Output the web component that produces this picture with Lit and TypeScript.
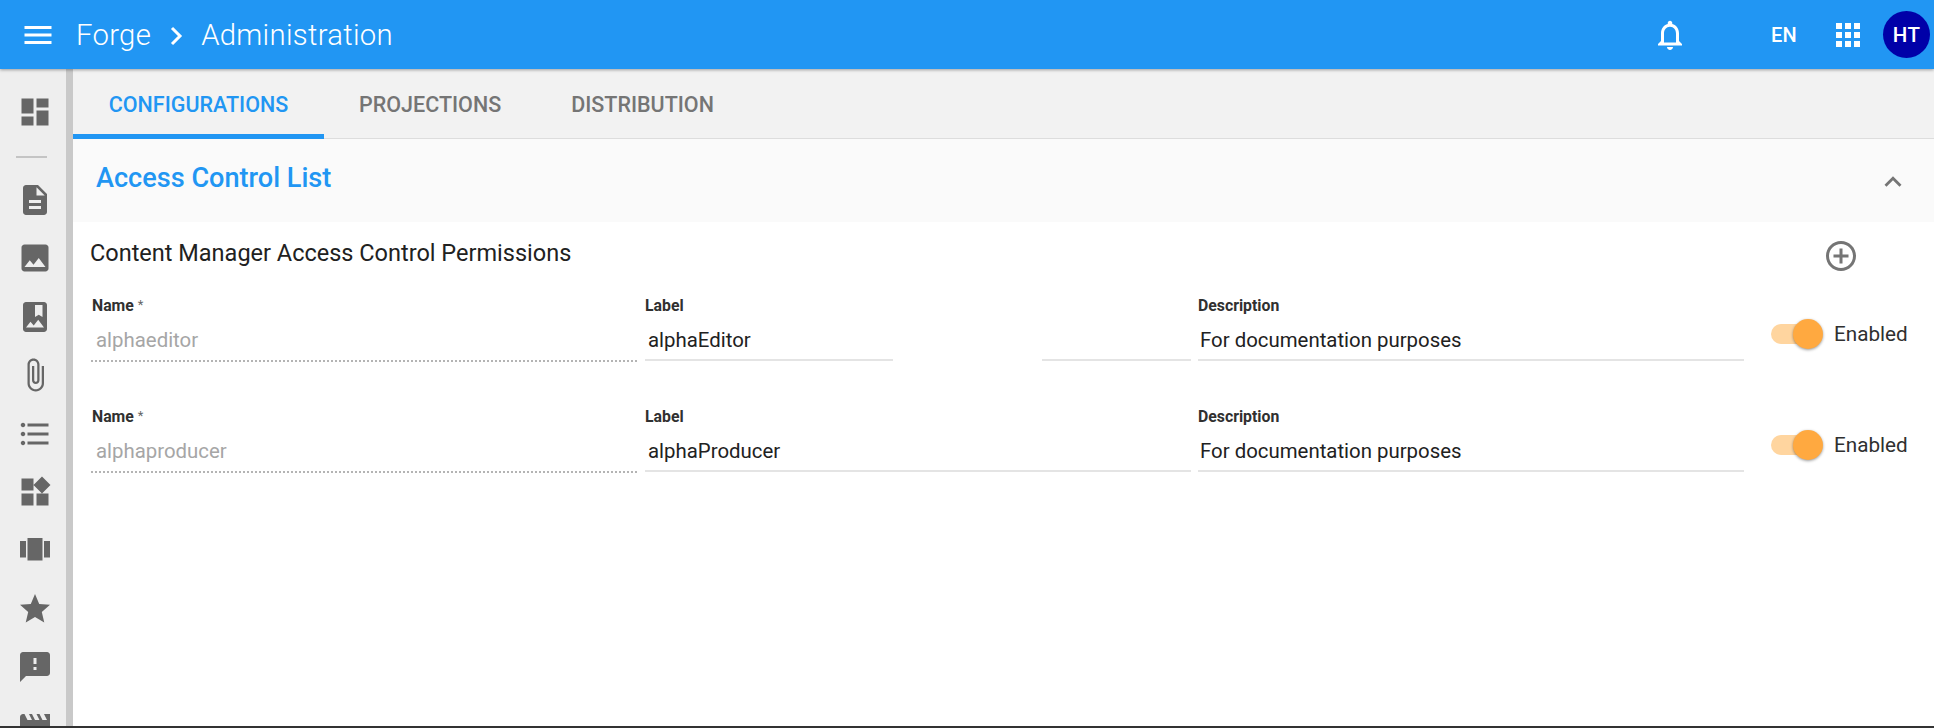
import { LitElement, html, css, svg } from "lit";
import { customElement } from "lit/decorators.js";

const ICONS: Record<string, any> = {
  dashboard: svg`<path d="M3 13h8V3H3v10zm0 8h8v-6H3v6zm10 0h8V11h-8v10zm0-18v6h8V3h-8z"/>`,
  description: svg`<path d="M14 2H6c-1.1 0-2 .9-2 2v16c0 1.1.9 2 2 2h12c1.1 0 2-.9 2-2V8l-6-6zm2 16H8v-2h8v2zm0-4H8v-2h8v2zm-3-5V3.5L18.5 9H13z"/>`,
  image: svg`<path d="M21 19V5c0-1.1-.9-2-2-2H5c-1.1 0-2 .9-2 2v14c0 1.1.9 2 2 2h14c1.1 0 2-.9 2-2zM8.5 13.5l2.5 3.01L14.5 12l4.5 6H5l3.5-4.5z"/>`,
  album: svg`<path d="M18 2H6c-1.1 0-2 .9-2 2v16c0 1.1.9 2 2 2h12c1.1 0 2-.9 2-2V4c0-1.1-.9-2-2-2zM12 4h5v8l-2.5-1.5L12 12V4zM6 19l3-3.86 2.14 2.58 3-3.86L18 19H6z"/>`,
  attach: svg`<path d="M16.5 6v11.5c0 2.21-1.79 4-4 4s-4-1.79-4-4V5c0-1.38 1.12-2.5 2.5-2.5s2.5 1.12 2.5 2.5v10.5c0 .55-.45 1-1 1s-1-.45-1-1V6H10v9.5c0 1.38 1.12 2.5 2.5 2.5s2.5-1.12 2.5-2.5V5c0-2.21-1.79-4-4-4S7 2.79 7 5v12.5c0 3.04 2.46 5.5 5.5 5.5s5.5-2.46 5.5-5.5V6h-1.5z"/>`,
  list: svg`<path d="M4 10.5c-.83 0-1.5.67-1.5 1.5s.67 1.5 1.5 1.5 1.5-.67 1.5-1.5-.67-1.5-1.5-1.5zm0-6c-.83 0-1.5.67-1.5 1.5S3.17 7.5 4 7.5 5.5 6.83 5.5 6 4.83 4.5 4 4.5zm0 12c-.83 0-1.5.68-1.5 1.5s.68 1.5 1.5 1.5 1.5-.68 1.5-1.5-.67-1.5-1.5-1.5zM7 19h14v-2H7v2zm0-6h14v-2H7v2zm0-8v2h14V5H7z"/>`,
  widgets: svg`<path d="M13 13v8h8v-8h-8zM3 21h8v-8H3v8zM3 3v8h8V3H3zm13.66-1.31L11 7.34 16.66 13l5.66-5.66-5.66-5.65z"/>`,
  carousel: svg`<path d="M7 19h10V4H7v15zm-5-2h4V6H2v11zM18 6v11h4V6h-4z"/>`,
  star: svg`<path d="M12 17.27L18.18 21l-1.64-7.03L22 9.24l-7.19-.61L12 2 9.19 8.63 2 9.24l5.46 4.73L5.82 21z"/>`,
  announce: svg`<path d="M20 2H4c-1.1 0-1.99.9-1.99 2L2 22l4-4h14c1.1 0 2-.9 2-2V4c0-1.1-.9-2-2-2zm-7 12h-2v-2h2v2zm0-4h-2V6h2v4z"/>`,
  movie: svg`<path d="M18 4l2 4h-3l-2-4h-2l2 4h-3l-2-4H8l2 4H7L5 4H4c-1.1 0-1.99.9-1.99 2L2 18c0 1.1.9 2 2 2h16c1.1 0 2-.9 2-2V4h-4z"/>`,
};

const SIDE_TOP = ["dashboard"];
const SIDE_REST = ["description", "image", "album", "attach", "list", "widgets", "carousel", "star", "announce", "movie"];

const ROWS = [
  { name: "alphaeditor", label: "alphaEditor", split: true },
  { name: "alphaproducer", label: "alphaProducer", split: false },
];

@customElement("app-root")
export class AppRoot extends LitElement {
  static styles = css`
    :host {
      display: block;
      height: 728px;
      overflow: hidden;
      font-family: Roboto, "Liberation Sans", sans-serif;
      background: #fff;
      position: relative;
    }
    .frame { display: flex; flex-direction: column; height: 726px; border-bottom: 2px solid #333; overflow: hidden; }
    header {
      flex: none; height: 69px; background: #2196f3; color: #fff;
      display: flex; align-items: center;
      box-shadow: 0 1px 3px rgba(0,0,0,.35);
      position: relative; z-index: 2;
    }
    .menu { width: 36px; height: 36px; margin-left: 20px; fill: #fff; flex: none; }
    .crumb { font-size: 29.3px; font-weight: 300; letter-spacing: .3px; }
    .forge { margin-left: 20px; }
    .sep { width: 16px; height: 22px; margin: 2px 16px 0 18px; flex: none; fill: none; stroke: #fff; stroke-width: 3; }
    .spacer { flex: 1; }
    .bell { width: 36px; height: 36px; fill: #fff; flex: none; margin-right: 74px; }
    .lang { font-size: 20px; font-weight: 500; margin-right: 30px; width: 44px; text-align: center; letter-spacing: .2px; }
    .apps { width: 24px; height: 24px; flex: none; display: grid; grid-template-columns: repeat(3, 6px); grid-auto-rows: 6px; gap: 3px; margin-right: 23px; }
    .apps i { background: #fff; display: block; }
    .avatar {
      width: 47px; height: 47px; border-radius: 50%; background: #0000a8; margin-right: 4px; flex: none;
      display: flex; align-items: center; justify-content: center; font-size: 20.5px; font-weight: 500; letter-spacing: .5px;
    }
    .body { flex: 1; display: flex; min-height: 0; }
    aside {
      flex: none; width: 66px; background: #eee; border-right: 7px solid #c9c9c9;
      display: flex; flex-direction: column; align-items: center; overflow: hidden; padding-top: 25px;
    }
    aside svg { width: 36px; height: 36px; fill: #666; flex: none; margin-left: 4px; margin-bottom: 22.4px; }
    aside .rule { flex: none; width: 31px; height: 2px; background: #c4c4c4; margin: 26px 3px 24px 0; }
    aside svg.first { margin-bottom: 0; }
    main { flex: 1; min-width: 0; display: flex; flex-direction: column; }
    .tabs { flex: none; height: 70px; background: #f2f2f2; border-bottom: 1px solid #ddd; display: flex; box-sizing: border-box; }
    .tab {
      box-sizing: border-box; height: 70px; padding: 5px 35px 0; display: flex; align-items: center;
      font-size: 21.5px; font-weight: 500; color: #757575; border-bottom: 5px solid transparent;
    }
    .tab.on { color: #2196f3; border-bottom-color: #2196f3; width: 251px; justify-content: center; padding-left: 0; padding-right: 0; }
    .acc { flex: none; height: 83px; background: #fafafa; display: flex; align-items: center; padding: 0 24px 0 23px; color: #2196f3; font-size: 27.1px; font-weight: 500; }
    .acc .grow { flex: 1; }
    .acc .atitle { margin-top: -5px; }
    .acc svg { width: 34px; height: 34px; fill: #757575; margin-top: 2px; }
    .content { padding: 0 0 0 18px; }
    .title-row { display: flex; align-items: center; height: 62px; }
    .title { flex: 1; font-size: 23.5px; color: #212121; margin-left: -1px; }
    .plus { width: 36px; height: 36px; fill: #757575; margin-right: 75px; margin-top: 6px; flex: none; }
    .row { display: flex; height: 111px; }
    .field { flex: none; padding-top: 15px; display: flex; flex-direction: column; box-sizing: border-box; }
    .field label { font-size: 15.8px; font-weight: 700; color: #303030; line-height: 14px; }
    .f1 label { margin-left: 1px; }
    .field label sup { font-weight: 400; font-size: 13px; color: #666; line-height: 0; vertical-align: baseline; position: relative; top: -2px; }
    .val { font-size: 20.4px; line-height: 24px; height: 24px; margin-top: 15px; margin-left: 2px; color: #212121; }
    .f2 .val { margin-left: 3px; }
    .val.ro { color: #a6a6a6; margin-left: 5px; font-weight: 400; }
    .under { height: 2px; margin-top: 7px; background: #e4e4e4; }
    .dots { height: 0; margin-top: 8px; border-bottom: 2px dotted #b4b4b4; }
    .split { display: flex; justify-content: space-between; margin-top: 7px; }
    .split span { height: 2px; background: #e4e4e4; }
    .f1 { width: 546px; margin-right: 8px; }
    .f2 { width: 546px; margin-right: 7px; }
    .f3 { width: 546px; }
    .tog { display: flex; align-items: center; height: 30px; margin: 35px 0 0 27px; }
    .track { width: 44px; height: 20px; border-radius: 10px; background: #ffd59f; position: relative; flex: none; }
    .knob { position: absolute; left: 22px; top: -5px; width: 30px; height: 30px; border-radius: 50%; background: #ffa940; box-shadow: 0 1px 3px rgba(0,0,0,.4); }
    .tog b { font-weight: 400; font-size: 20.7px; color: #303030; margin-left: 19px; }
  `;

  private icon(k: string, cls = "") {
    return html`<svg class=${cls} viewBox="0 0 24 24">${ICONS[k]}</svg>`;
  }

  render() {
    return html`<div class="frame">
      <header>
        <svg class="menu" viewBox="0 0 24 24"><path d="M3 18h18v-2H3v2zm0-5h18v-2H3v2zm0-7v2h18V6H3z"/></svg>
        <span class="crumb forge">Forge</span>
        <svg class="sep" viewBox="0 0 16 22"><path d="M3 3l8 8-8 8"/></svg>
        <span class="crumb">Administration</span>
        <span class="spacer"></span>
        <svg class="bell" viewBox="0 0 24 24"><path d="M12 22c1.1 0 2-.9 2-2h-4c0 1.1.9 2 2 2zm6-6v-5c0-3.07-1.63-5.64-4.5-6.32V4c0-.83-.67-1.5-1.5-1.5s-1.5.67-1.5 1.5v.68C7.64 5.36 6 7.92 6 11v5l-2 2v1h16v-1l-2-2zm-2 1H8v-6c0-2.48 1.51-4.5 4-4.5s4 2.02 4 4.5v6z"/></svg>
        <span class="lang">EN</span>
        <div class="apps">${Array.from({ length: 9 }, () => html`<i></i>`)}</div>
        <div class="avatar">HT</div>
      </header>
      <div class="body">
        <aside>
          ${SIDE_TOP.map((k) => this.icon(k, "first"))}
          <div class="rule"></div>
          ${SIDE_REST.map((k) => this.icon(k))}
        </aside>
        <main>
          <nav class="tabs">
            <div class="tab on">CONFIGURATIONS</div>
            <div class="tab">PROJECTIONS</div>
            <div class="tab">DISTRIBUTION</div>
          </nav>
          <section class="acc">
            <span class="atitle">Access Control List</span><span class="grow"></span>
            <svg viewBox="0 0 24 24"><path d="M12 8l-6 6 1.41 1.41L12 10.83l4.59 4.58L18 14z"/></svg>
          </section>
          <div class="content">
            <div class="title-row">
              <span class="title">Content Manager Access Control Permissions</span>
              <svg class="plus" viewBox="0 0 24 24"><path d="M13 7h-2v4H7v2h4v4h2v-4h4v-2h-4V7zm-1-5C6.48 2 2 6.48 2 12s4.48 10 10 10 10-4.48 10-10S17.52 2 12 2zm0 18c-4.41 0-8-3.59-8-8s3.59-8 8-8 8 3.59 8 8-3.59 8-8 8z"/></svg>
            </div>
            ${ROWS.map((r) => html`<div class="row">
              <div class="field f1">
                <label>Name <sup>*</sup></label>
                <div class="val ro">${r.name}</div>
                <div class="dots"></div>
              </div>
              <div class="field f2">
                <label>Label</label>
                <div class="val">${r.label}</div>
                ${r.split
                  ? html`<div class="split"><span style="width:248px"></span><span style="width:149px"></span></div>`
                  : html`<div class="under"></div>`}
              </div>
              <div class="field f3">
                <label>Description</label>
                <div class="val">For documentation purposes</div>
                <div class="under"></div>
              </div>
              <div class="tog"><div class="track"><div class="knob"></div></div><b>Enabled</b></div>
            </div>`)}
          </div>
        </main>
      </div>
    </div>`;
  }
}
